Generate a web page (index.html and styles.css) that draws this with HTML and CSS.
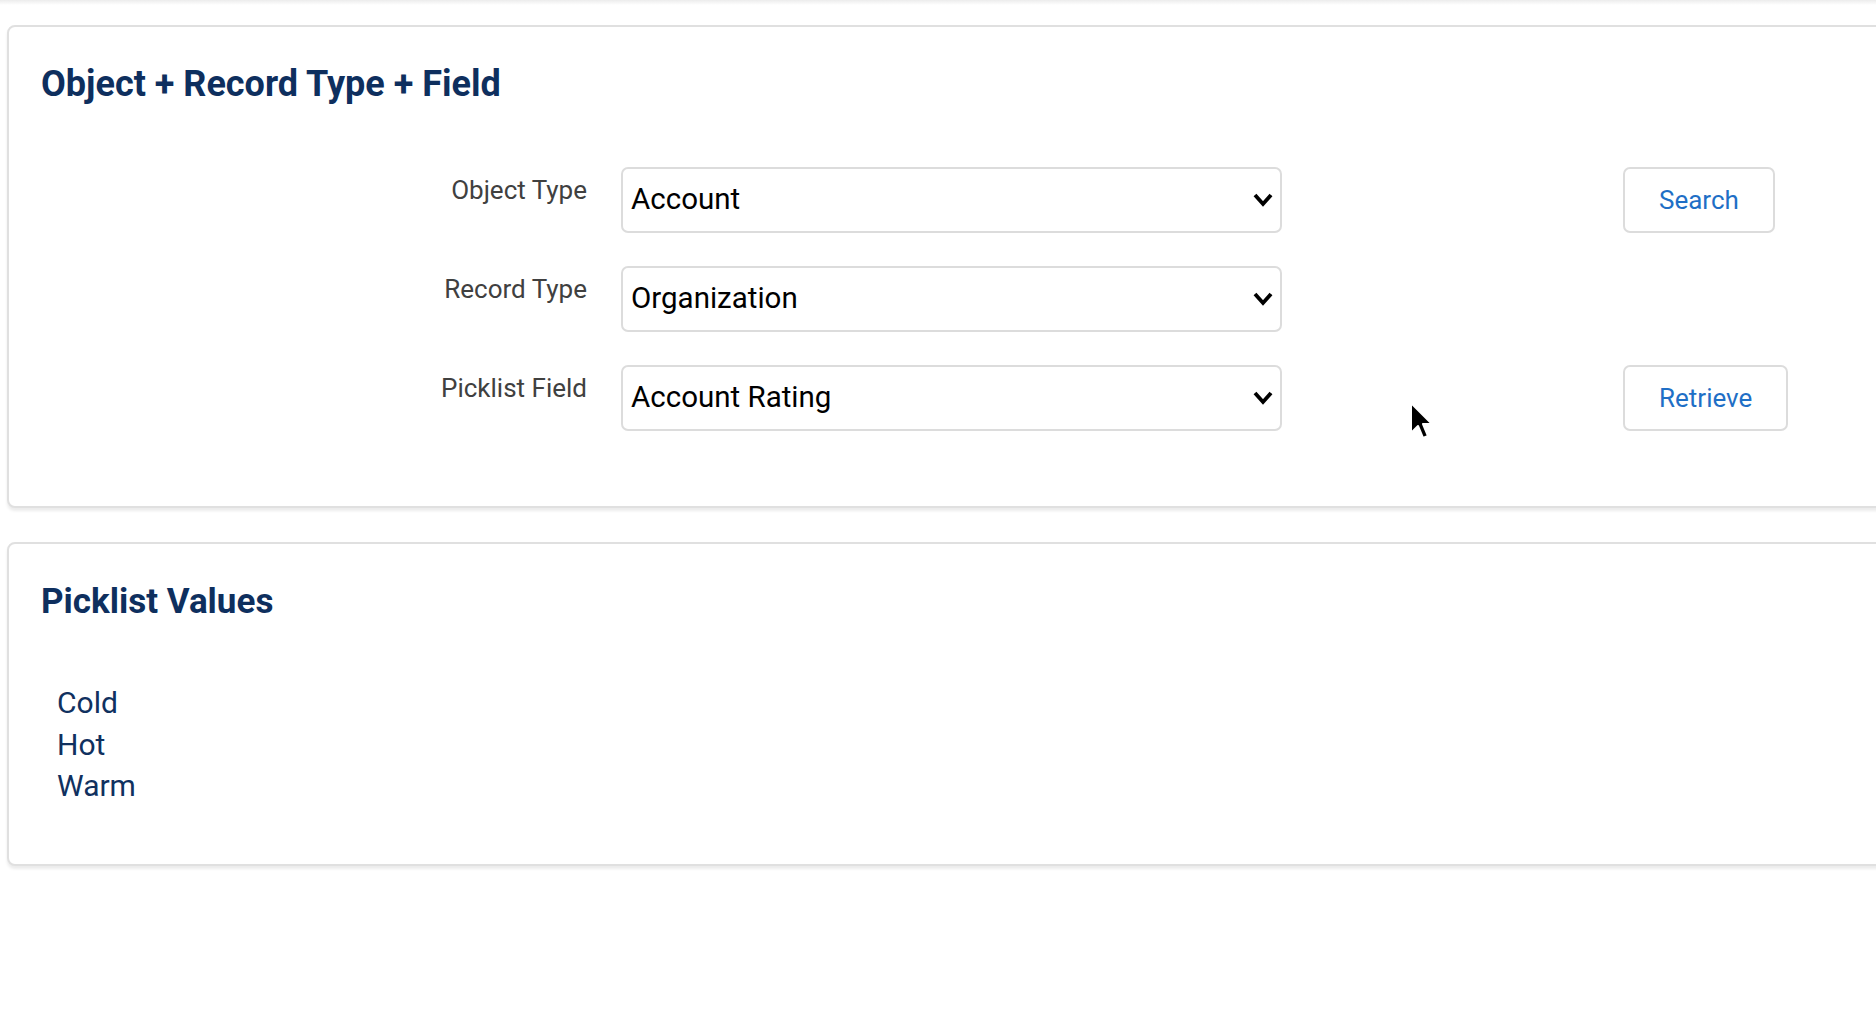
FILE: index.html
```html
<!DOCTYPE html>
<html lang="en">
<head>
<meta charset="utf-8">
<title>Picklist Values</title>
<link rel="stylesheet" href="styles.css">
</head>
<body>
<div class="topedge"></div>
<section class="card">
  <h2 class="card-title">Object + Record Type + Field</h2>
  <div class="form">
    <div class="row">
      <label class="label">Object Type</label>
      <div class="select"><span>Account</span><svg class="chev" viewBox="0 0 20 14" width="20" height="14"><polyline points="2,2 10,11 18,2" fill="none" stroke="#000" stroke-width="3.8" stroke-linecap="butt" stroke-linejoin="miter"/></svg></div>
      <button class="btn">Search</button>
    </div>
    <div class="row">
      <label class="label">Record Type</label>
      <div class="select"><span>Organization</span><svg class="chev" viewBox="0 0 20 14" width="20" height="14"><polyline points="2,2 10,11 18,2" fill="none" stroke="#000" stroke-width="3.8" stroke-linecap="butt" stroke-linejoin="miter"/></svg></div>
    </div>
    <div class="row">
      <label class="label">Picklist Field</label>
      <div class="select"><span>Account Rating</span><svg class="chev" viewBox="0 0 20 14" width="20" height="14"><polyline points="2,2 10,11 18,2" fill="none" stroke="#000" stroke-width="3.8" stroke-linecap="butt" stroke-linejoin="miter"/></svg></div>
      <button class="btn">Retrieve</button>
    </div>
  </div>
</section>
<section class="card card2">
  <h2 class="card-title">Picklist Values</h2>
  <ul class="values">
    <li>Cold</li>
    <li>Hot</li>
    <li>Warm</li>
  </ul>
</section>
<svg class="cursor" viewBox="0 0 24 40" width="24" height="40"><path d="M2 2 L2 32 L9 25 L14 37 L19 35 L14 23 L23 23 Z" fill="#000" stroke="#fff" stroke-width="2" stroke-linejoin="round"/></svg>
</body>
</html>
```
FILE: styles.css
```css
html, body {
  margin: 0;
  padding: 0;
  background: #fff;
  overflow: hidden;
  font-family: Roboto, "Noto Sans", sans-serif;
}
body {
  position: relative;
  width: 1876px;
  height: 1024px;
}
.topedge {
  height: 5px;
  background: linear-gradient(#ececec, #fff);
}
.card {
  margin-left: 7px;
  margin-top: 20px;
  width: 1920px;
  box-sizing: border-box;
  border: 2px solid #e0e0e0;
  border-radius: 8px;
  box-shadow: 0 3px 3px rgba(0, 0, 0, 0.08);
  padding: 36px 0 75px 32px;
  background: #fff;
}
.card2 {
  margin-top: 34px;
  padding-bottom: 57px;
}
.card-title {
  margin: 0;
  font-size: 36px;
  line-height: 43px;
  font-weight: 700;
  color: #0e2f5e;
}
.card2 .card-title {
  font-size: 35px;
}
.form {
  margin-top: 61px;
  display: flex;
  flex-direction: column;
  gap: 33px;
}
.row {
  display: flex;
  align-items: flex-start;
  height: 66px;
}
.label {
  width: 546px;
  text-align: right;
  margin-right: 34px;
  padding-top: 4px;
  font-size: 26px;
  line-height: 39px;
  color: #404040;
}
.select {
  width: 661px;
  height: 66px;
  box-sizing: border-box;
  border: 2px solid #dcdcdc;
  border-radius: 7px;
  display: flex;
  align-items: center;
  justify-content: space-between;
  padding: 0 7px 0 8px;
  font-size: 29.5px;
  color: #000;
}
.select span {
  padding-bottom: 2px;
}
.btn {
  margin-left: 341px;
  height: 66px;
  box-sizing: border-box;
  border: 2px solid #dcdcdc;
  border-radius: 7px;
  background: #fff;
  padding: 0 34px;
  font-family: Roboto, "Noto Sans", sans-serif;
  font-size: 26px;
  color: #1f6fc6;
}
.values {
  list-style: none;
  margin: 59px 0 0 16px;
  padding: 0;
  font-size: 30px;
  line-height: 41.5px;
  color: #10315f;
}
.cursor {
  position: absolute;
  left: 1409px;
  top: 401px;
}
```
